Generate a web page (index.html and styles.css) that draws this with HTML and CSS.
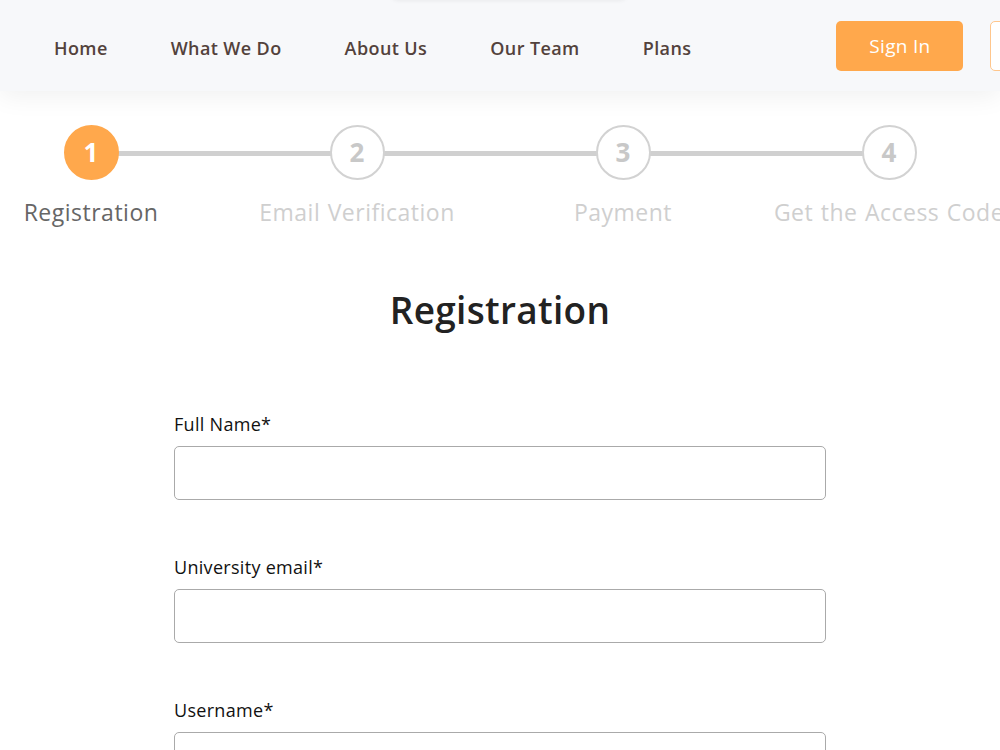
FILE: index.html
```html
<!DOCTYPE html>
<html lang="en">
<head>
    <meta charset="UTF-8">
    <title>Registration</title>
    <link rel="stylesheet" href="styles.css">
</head>
<body>
<!--顶部导航-->
<div class="header">
    <div class="header-drop"></div>
    <ul class="nav">
        <li><a href="#">Home</a></li>
        <li><a href="#">What We Do</a></li>
        <li><a href="#">About Us</a></li>
        <li><a href="#">Our Team</a></li>
        <li><a href="#">Plans</a></li>
    </ul>
    <div class="actions">
        <a href="#" class="btn btn-fill">Sign In</a>
        <a href="#" class="btn btn-line"></a>
    </div>
</div>

<!--步骤条-->
<ol class="stepper">
    <li class="step active">
        <span class="circle">1</span>
        <span class="step-name">Registration</span>
    </li>
    <li class="step">
        <span class="circle">2</span>
        <span class="step-name">Email Verification</span>
    </li>
    <li class="step">
        <span class="circle">3</span>
        <span class="step-name">Payment</span>
    </li>
    <li class="step last">
        <span class="circle">4</span>
        <span class="step-name">Get the Access Code</span>
    </li>
</ol>

<!--表单-->
<div class="main">
    <h1 class="title">Registration</h1>
    <form class="form">
        <div class="field">
            <label for="fullname">Full Name*</label>
            <input type="text" id="fullname">
        </div>
        <div class="field">
            <label for="email">University email*</label>
            <input type="email" id="email">
        </div>
        <div class="field">
            <label for="username">Username*</label>
            <input type="text" id="username">
        </div>
    </form>
</div>
</body>
</html>
```

FILE: styles.css
```css
body, ul, ol, li, h1, form {
    margin: 0;
    padding: 0;
    list-style: none;
}

body {
    font-family: "Open Sans", "Liberation Sans", sans-serif;
    background: #fff;
    overflow-x: hidden;
    color: #222;
}

a {
    text-decoration: none;
}

/* header */
.header {
    position: relative;
    display: flex;
    align-items: center;
    height: 91px;
    background: #f7f8fa;
    box-shadow: 0 6px 24px rgba(0, 0, 0, 0.06);
    white-space: nowrap;
}

.header-drop {
    position: absolute;
    left: 388px;
    top: -40px;
    width: 242px;
    height: 40px;
    border-radius: 12px;
    background: #f7f8fa;
    box-shadow: 0 1px 4px rgba(0, 0, 0, 0.06);
}

.nav {
    display: flex;
    gap: 63px;
    padding-left: 54px;
    padding-top: 4px;
}

.nav a {
    font-size: 18px;
    font-weight: 600;
    letter-spacing: 0.4px;
    color: #53423c;
}

.actions {
    display: flex;
    flex-shrink: 0;
    gap: 27px;
    margin-left: 145px;
}

.btn {
    display: block;
    flex-shrink: 0;
    box-sizing: border-box;
    width: 127px;
    height: 50px;
    line-height: 50px;
    text-align: center;
    border-radius: 5px;
    font-size: 19px;
    letter-spacing: 0.3px;
}

.btn-fill {
    background: #ffa84c;
    color: #fff;
}

.btn-line {
    border: 1px solid #ffc68c;
    background: #fff;
}

/* stepper */
.stepper {
    display: grid;
    grid-template-columns: repeat(4, 266px);
    margin: 34px 0 0 -42px;
}

.step {
    position: relative;
    display: flex;
    flex-direction: column;
    align-items: center;
}

.step::after {
    content: "";
    position: absolute;
    left: 133px;
    top: 26px;
    width: 266px;
    height: 5px;
    background: #d0d0d0;
}

.step.last::after {
    display: none;
}

.circle {
    position: relative;
    z-index: 1;
    box-sizing: border-box;
    width: 55px;
    height: 55px;
    line-height: 51px;
    border: 2px solid #d2d2d2;
    border-radius: 50%;
    background: #fff;
    text-align: center;
    font-size: 26px;
    font-weight: 700;
    color: #c8c8c8;
}

.step.active .circle {
    border-color: #ffa84c;
    background: #ffa84c;
    color: #fff;
}

.step-name {
    margin-top: 17px;
    font-size: 23px;
    line-height: 30px;
    letter-spacing: 0.5px;
    word-spacing: 1px;
    white-space: nowrap;
    color: #cfcfcf;
}

.step.active .step-name {
    color: #666;
}

/* form */
.main {
    width: 652px;
    margin: 0 auto;
}

.title {
    margin-top: 61px;
    text-align: center;
    font-size: 37px;
    line-height: 44px;
    font-weight: 600;
    letter-spacing: 0.3px;
    color: #222;
}

.form {
    margin-top: 80px;
}

.field {
    margin-bottom: 55px;
}

.field label {
    display: block;
    font-size: 18px;
    line-height: 24px;
    font-weight: 500;
    letter-spacing: 0.3px;
    color: #111;
    margin-bottom: 10px;
}

.field input {
    display: block;
    box-sizing: border-box;
    width: 100%;
    height: 54px;
    border: 1px solid #aaa;
    border-radius: 5px;
    background: #fff;
    font-size: 16px;
    padding: 0 14px;
    outline: none;
}
```
